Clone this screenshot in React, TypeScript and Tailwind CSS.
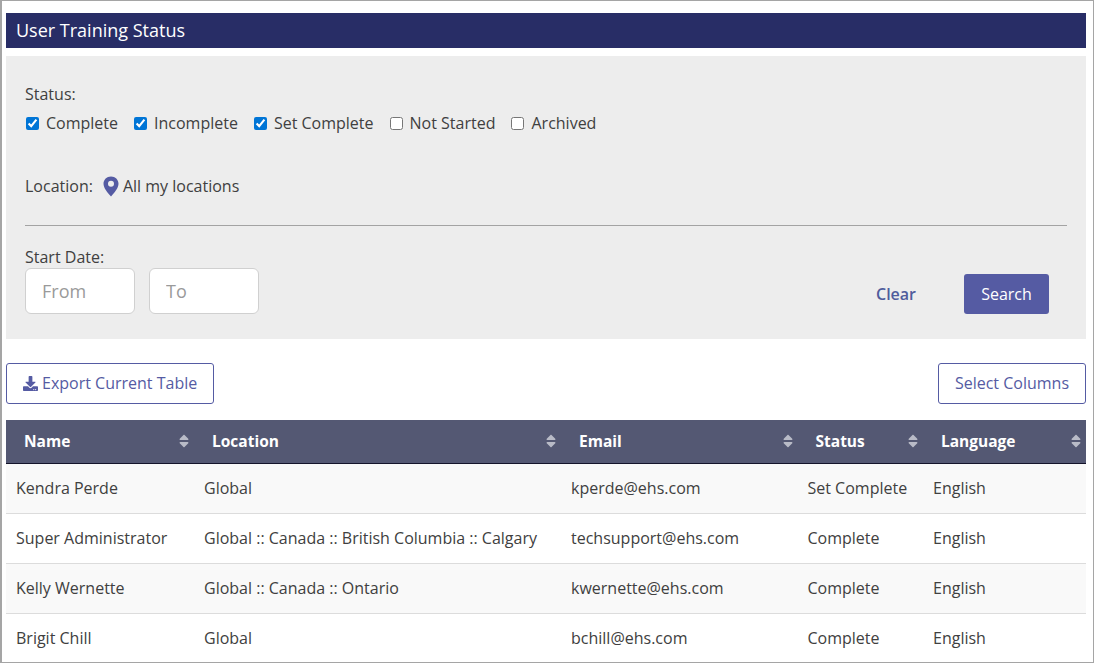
import React from 'react';
import { FaDownload, FaSort } from 'react-icons/fa';

const statuses = [
  { label: 'Complete', checked: true },
  { label: 'Incomplete', checked: true },
  { label: 'Set Complete', checked: true },
  { label: 'Not Started', checked: false },
  { label: 'Archived', checked: false },
];

const columns = [
  { label: 'Name', width: 'w-[188px]' },
  { label: 'Location', width: 'w-[367px]' },
  { label: 'Email', width: 'w-[236.5px]' },
  { label: 'Status', width: 'w-[125.5px]' },
  { label: 'Language', width: 'w-[163px]' },
];

const rows = [
  ['Kendra Perde', 'Global', 'kperde@ehs.com', 'Set Complete', 'English'],
  ['Super Administrator', 'Global :: Canada :: British Columbia :: Calgary', 'techsupport@ehs.com', 'Complete', 'English'],
  ['Kelly Wernette', 'Global :: Canada :: Ontario', 'kwernette@ehs.com', 'Complete', 'English'],
  ['Brigit Chill', 'Global', 'bchill@ehs.com', 'Complete', 'English'],
];

export default function App() {
  return (
    <div className="h-[663px] w-[1094px] overflow-hidden border border-l-2 border-[#a5a5a5] bg-white pl-1 pr-[7px] pt-3 font-['Open_Sans',sans-serif] text-base text-[#404040]">
      <h1 className="flex h-[35px] items-center bg-[#282d66] px-2.5 text-[18px] font-normal text-white">User Training Status</h1>

      {/* Filters */}
      <section className="mt-2 h-[283px] bg-[#ededed] px-[19px] pt-[27px]">
        <div className="h-[22px] leading-[22px]">Status:</div>
        <div className="mt-[7px] flex h-[22px] items-center gap-4 pl-px">
          {statuses.map((s) => (
            <label key={s.label} className="flex items-center gap-[7px] leading-[22px]">
              <input type="checkbox" defaultChecked={s.checked} className="m-0 h-[13px] w-[13px] accent-[#0075d6]" />
              {s.label}
            </label>
          ))}
        </div>
        <div className="mt-[39px] flex h-[26px] items-center">
          <span>Location:</span>
          <svg viewBox="0 0 16 21" className="ml-[10px] mr-1 h-[21px] w-4 text-[#555ba3]" fill="currentColor">
            <path fillRule="evenodd" d="M8 0.5C3.7 0.5 0.5 3.7 0.5 7.7C0.5 12 4.6 16.5 8 20.5C11.4 16.5 15.5 12 15.5 7.7C15.5 3.7 12.3 0.5 8 0.5ZM8 4.7A3 3 0 1 1 8 10.7A3 3 0 1 1 8 4.7Z" />
          </svg>
          <span>All my locations</span>
        </div>
        <hr className="mt-[26px] border-t border-[#a3a3a3]" />
        <div className="mt-[20px] h-[22px] leading-[22px]">Start Date:</div>
        <div className="flex items-end justify-between">
          <div className="flex gap-[14px]">
            <input placeholder="From" className="h-[46px] w-[110px] rounded-md border border-[#d0d0d0] bg-white px-4 text-[18px] placeholder:text-[#9a9a9a]" />
            <input placeholder="To" className="h-[46px] w-[110px] rounded-md border border-[#d0d0d0] bg-white px-4 text-[18px] placeholder:text-[#9a9a9a]" />
          </div>
          <div className="mr-[18px] flex items-center gap-[48px]">
            <button className="font-semibold text-[#4f5c9c]">Clear</button>
            <button className="h-10 w-[85px] rounded-[3px] bg-[#555ba3] text-white">Search</button>
          </div>
        </div>
      </section>

      {/* Table actions */}
      <div className="mt-6 flex items-center justify-between">
        <button className="flex h-[41px] items-center gap-1 rounded-[3px] border border-[#555ba3] bg-white px-4 pb-px text-[#555ba3]">
          <FaDownload className="text-[15px]" />
          Export Current Table
        </button>
        <button className="h-[41px] rounded-[3px] border border-[#555ba3] bg-white px-4 pb-px text-[#555ba3]">Select Columns</button>
      </div>

      <table className="mt-4 w-[1080px] table-fixed border-collapse text-left">
        <thead>
          <tr className="h-[43px] border-b border-[#14142a] bg-[#545873] text-white">
            {columns.map((c) => (
              <th key={c.label} className={`${c.width} p-0`}>
                <div className="flex items-center justify-between pl-[18px] pr-0.5 text-[15.5px] font-bold">
                  {c.label}
                  <FaSort className="text-[16px] text-[#b9bbc7]" />
                </div>
              </th>
            ))}
          </tr>
        </thead>
        <tbody>
          {rows.map((row, i) => (
            <tr key={row[0]} className={`h-[50px] border-b border-[#dcdcdc] ${i % 2 === 0 ? 'bg-[#f9f9f9]' : 'bg-white'}`}>
              {row.map((cell, j) => (
                <td key={j} className="whitespace-nowrap px-2.5 py-0">{cell}</td>
              ))}
            </tr>
          ))}
        </tbody>
      </table>
    </div>
  );
}
